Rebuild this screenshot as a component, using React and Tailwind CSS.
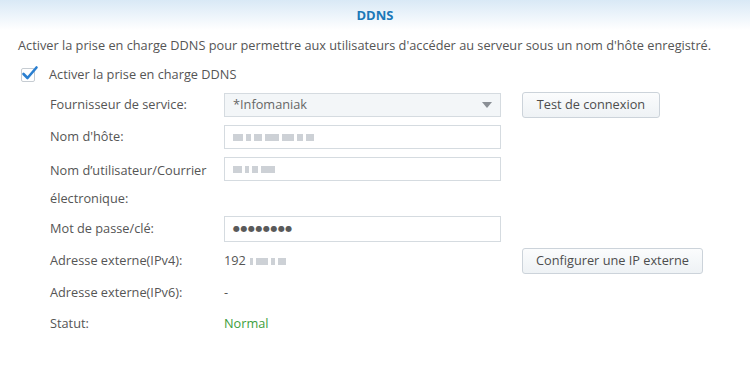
import React from "react";

const Blur = ({ widths }) => (
  <div className="flex items-center gap-[3px]">
    {widths.map((w, i) => (
      <span
        key={i}
        className="inline-block h-[7px] bg-[#b9bec6] opacity-70 blur-[0.6px]"
        style={{ width: w }}
      />
    ))}
  </div>
);

const Row = ({ label, className = "", children }) => (
  <div className={`flex items-center h-[26px] ${className}`}>
    <div className="w-[174px] shrink-0 text-[#555] whitespace-nowrap">{label}</div>
    {children}
  </div>
);

const Button = ({ children, className = "" }) => (
  <button
    className={`h-[26px] border border-[#ccd3da] rounded-[3px] bg-gradient-to-b from-[#fbfcfd] to-[#eef2f5] text-[#4d4d4d] whitespace-nowrap ${className}`}
  >
    {children}
  </button>
);

export default function App() {
  return (
    <div
      className="w-[750px] h-[372px] bg-white text-[12.75px] text-[#555] overflow-hidden"
      style={{ fontFamily: "'Open Sans', 'Noto Sans', sans-serif" }}
    >
      <div className="h-[30px] bg-gradient-to-b from-[#d9e9f6] to-white flex items-center justify-center">
        <span className="text-[#1b78b8] font-bold text-[13px] pt-[1px]">DDNS</span>
      </div>

      <div className="pl-[18px] mt-[6px] h-[18px] leading-[18px] whitespace-nowrap">
        Activer la prise en charge DDNS pour permettre aux utilisateurs d'accéder au serveur sous un nom d'hôte enregistré.
      </div>

      <div className="flex items-center pl-[21px] mt-[12px] h-[18px]">
        <div className="relative w-[14px] h-[14px] border border-[#c6ccd2] bg-white rounded-[2px]">
          <svg
            className="absolute -left-[1px] -top-[4px]"
            width="18"
            height="16"
            viewBox="0 0 18 16"
          >
            <path d="M2.5 9 L6.5 13 L15.5 2.5" fill="none" stroke="#2b7fd0" strokeWidth="2.6" strokeLinecap="round" strokeLinejoin="round" />
          </svg>
        </div>
        <span className="ml-[14px]">Activer la prise en charge DDNS</span>
      </div>

      <div className="pl-[50px]">
        <Row label="Fournisseur de service:" className="mt-[8px]">
          <div className="w-[277px] h-[24px] border border-[#d5dbe0] bg-[#f3f6f8] flex items-center justify-between px-[8px]">
            <span className="text-[#666]">*Infomaniak</span>
            <svg width="10" height="6" viewBox="0 0 10 6">
              <path d="M0 0 L10 0 L5 6 Z" fill="#8a8f95" />
            </svg>
          </div>
          <Button className="ml-[21px] w-[138px]">Test de connexion</Button>
        </Row>

        <Row label="Nom d'hôte:" className="mt-[6px]">
          <div className="w-[277px] h-[24px] border border-[#d5dbe0] bg-white flex items-center px-[8px]">
            <Blur widths={[10, 5, 8, 14, 12, 6, 8]} />
          </div>
        </Row>

        <div className="flex items-start mt-[6px] h-[60px]">
          <div className="w-[174px] shrink-0 leading-[28px]">
            Nom d’utilisateur/Courrier
            <br />
            électronique:
          </div>
          <div className="w-[277px] h-[24px] mt-[1px] border border-[#d5dbe0] bg-white flex items-center px-[8px]">
            <Blur widths={[9, 4, 6, 14]} />
          </div>
        </div>

        <Row label="Mot de passe/clé:">
          <div
            className="w-[277px] h-[26px] border border-[#d5dbe0] bg-white flex items-center px-[8px] text-[#5a5a5a] tracking-[0.5px] text-[8px]"
            style={{ fontFamily: "'DejaVu Sans', sans-serif" }}
          >
            ●●●●●●●●
          </div>
        </Row>

        <Row label="Adresse externe(IPv4):" className="mt-[6px]">
          <div className="w-[277px] flex items-center gap-[4px]">
            <span>192</span>
            <Blur widths={[3, 12, 4, 8]} />
          </div>
          <Button className="ml-[21px] w-[181px]">Configurer une IP externe</Button>
        </Row>

        <Row label="Adresse externe(IPv6):" className="mt-[6px]">
          <span>-</span>
        </Row>

        <Row label="Statut:" className="mt-[5px]">
          <span className="text-[#3c9e3c]">Normal</span>
        </Row>
      </div>
    </div>
  );
}
